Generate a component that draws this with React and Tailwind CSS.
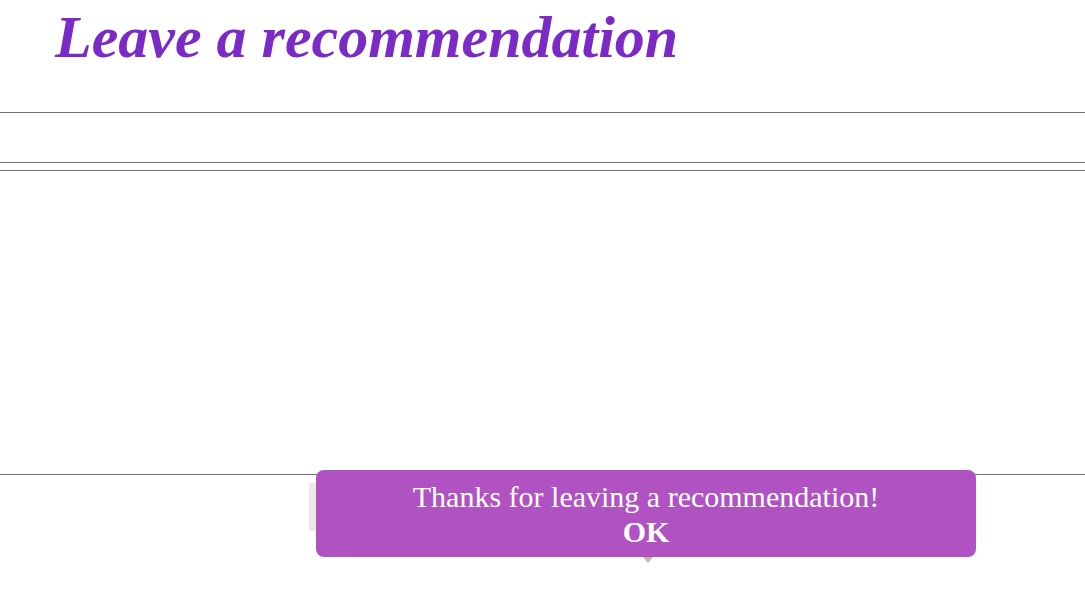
import React from "react";

export default function App() {
  return (
    <div className="relative min-h-[590px] bg-white font-['Liberation_Serif',serif]">
      <div className="h-[112px] pt-[2px]">
        <h1 className="pl-[55px] text-[60px] leading-[70px] font-bold italic text-[#7b2ac6]">
          Leave a recommendation
        </h1>
      </div>

      <div className="h-[51px] border-y border-[#707070]"></div>
      <div className="h-[7px]"></div>
      <div className="h-[305px] border-y border-[#707070]"></div>

      <div className="pl-[309px] pt-[8px]">
        <div className="w-[200px] h-[48px] bg-[#efe6e6]"></div>
      </div>

      <div className="absolute left-[316px] top-[470px] w-[660px] h-[87px] rounded-lg bg-[#b052c2] flex flex-col items-center pt-[9px] text-white">
        <p className="text-[30px] leading-[35px]">Thanks for leaving a recommendation!</p>
        <button className="text-[30px] leading-[35px] font-bold">OK</button>
        <div className="absolute left-[327px] -bottom-[6px] w-0 h-0 border-x-[5px] border-x-transparent border-t-[6px] border-t-[#c8b4b4]"></div>
      </div>
    </div>
  );
}
